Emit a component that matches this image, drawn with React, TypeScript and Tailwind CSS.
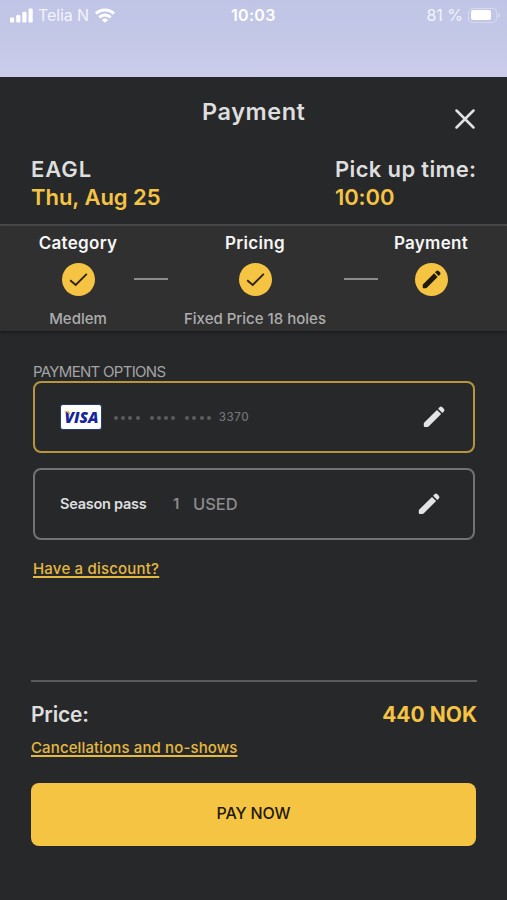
import React from "react";

type IconProps = { className?: string };

function Pencil({ className }: IconProps) {
  return (
    <svg viewBox="0 0 22 22" className={className} fill="currentColor">
      <path d="M14 3.900 18.100 8 5.600 20.500a1.700 1.700 0 0 1-1.200.500H1.800A1 1 0 0 1 .800 20v-2.400c0-.500.200-.900.500-1.200z" />
      <path d="m15.100 2.700 1.500-1.500a2 2 0 0 1 2.700 0l1.500 1.500a2 2 0 0 1 0 2.700l-1.500 1.500z" />
    </svg>
  );
}

function Check() {
  return (
    <svg viewBox="0 0 33 33" className="size-[33px]">
      <path d="M8.200 17.200 13.700 21.900 24.800 10.800" fill="none" stroke="#2b210c" strokeWidth="1.900" />
    </svg>
  );
}

function Signal() {
  return (
    <svg viewBox="0 0 23 15" className="h-[15px] w-[23px]" fill="#fff">
      <rect x="0" y="9.500" width="4.200" height="5" rx="1.200" />
      <rect x="6.200" y="7" width="4.200" height="7.500" rx="1.200" />
      <rect x="12.300" y="3.800" width="4.200" height="10.700" rx="1.200" />
      <rect x="18.500" y="0.500" width="4.200" height="14" rx="1.200" />
    </svg>
  );
}

function Wifi() {
  return (
    <svg viewBox="0 0 20 15" className="ml-[6px] h-[15px] w-[20px]" fill="none" stroke="#fff" strokeWidth="3">
      <path d="M1 5.600a12.800 12.800 0 0 1 18 0" />
      <path d="M4.300 9.400a8 8 0 0 1 11.400 0" />
      <path d="M10 14.800 6.900 11.900a4.300 4.300 0 0 1 6.200 0z" fill="#fff" stroke="none" />
    </svg>
  );
}

function StepLine({ className }: IconProps) {
  return <div className={`mt-[51.500px] h-0.5 w-[34px] shrink-0 bg-[#8b8b8b] ${className}`} />;
}

function Step({ title, note, children, className }: { title: string; note?: string; children: React.ReactNode; className: string }) {
  return (
    <div className={`flex shrink-0 flex-col items-center whitespace-nowrap ${className}`}>
      <div className="mt-[6px] h-[22px] text-[17px] leading-[22px] font-semibold tracking-[0.300px] text-[#f6f6f6]">{title}</div>
      <div className="mt-[9px] flex size-[33px] items-center justify-center rounded-full bg-[#f6c443] text-[#211a08]">{children}</div>
      <div className="mt-3 text-[15px] leading-[22px] font-medium text-[#adadad]">{note}</div>
    </div>
  );
}

function Dots() {
  return (
    <div className="flex gap-[10px]">
      {[0, 1, 2].map((group) => (
        <div key={group} className="flex gap-[3.200px]">
          {[0, 1, 2, 3].map((dot) => (
            <i key={dot} className="size-1 rounded-full bg-[#5c5d5f]" />
          ))}
        </div>
      ))}
    </div>
  );
}

function Visa() {
  return (
    <div className="flex h-[26px] w-[42px] items-center justify-center rounded-[3px] border border-[#243a80] bg-white">
      <svg viewBox="0 0 40 24" className="h-6 w-10">
        <text x="3.500" y="17.800" fontFamily="Open Sans, sans-serif" fontSize="16" fontWeight="800" fontStyle="italic" textLength="34" lengthAdjust="spacingAndGlyphs" fill="#17259a">
          VISA
        </text>
        <path d="M3 6.200h4.300c.700 0 1 .300 1.200 1l.900 3.600C8.300 8.700 6 7.200 3 6.600z" fill="#e8a33a" />
      </svg>
    </div>
  );
}

export default function App() {
  return (
    <main className="flex h-[900px] w-[507px] flex-col overflow-hidden bg-[#27282a] font-['Inter',sans-serif] whitespace-nowrap">
      <div className="h-[77px] shrink-0 bg-linear-to-b from-[#c0c5e6] via-[#c4c8e7] to-[#cbcdea] pt-1">
        <div className="flex h-[22px] items-center pr-[7px] pl-[10px] text-[#f3f4fc]">
          <div className="flex w-[221px] items-center">
            <Signal />
            <span className="ml-[5px] text-[16px] tracking-[-0.100px]">Telia N</span>
            <Wifi />
          </div>
          <span className="text-[16px] font-semibold tracking-[0.300px] text-white">10:03</span>
          <span className="ml-auto text-[16px]">81 %</span>
          <div className="ml-[5px] flex h-[15px] w-[29px] items-center rounded-[4px] border border-[#d6d9f0] pl-[2px]">
            <div className="h-[10px] w-[20px] rounded-[2px] bg-white" />
          </div>
          <div className="ml-px h-[5px] w-[2px] rounded-r bg-[#d6d9f0]" />
        </div>
      </div>

      <header className="h-[149px] shrink-0 border-b-2 border-[#4b4c4e] text-[#dededf]">
        <div className="flex h-[78px] pl-[202px]">
          <h1 className="mt-5 w-[253px] text-[23.500px] leading-[30px] font-semibold tracking-[0.550px]">Payment</h1>
          <svg viewBox="0 0 20 20" className="mt-8 size-5" stroke="#e2e2e2" strokeWidth="2.500" strokeLinecap="round">
            <path d="M1.500 1.500 18.500 18.500M18.500 1.500 1.500 18.500" />
          </svg>
        </div>
        <div className="flex justify-between pr-[31px] pl-[31px] text-[22px] leading-[28px] font-semibold">
          <div>
            <div className="tracking-[0.900px]">EAGL</div>
            <div className="tracking-[-0.030px] text-[#f6c443]">Thu, Aug 25</div>
          </div>
          <div className="w-[141px]">
            <div className="tracking-[0.350px]">Pick up time:</div>
            <div className="tracking-[-0.100px] text-[#f6c443]">10:00</div>
          </div>
        </div>
      </header>

      <section className="flex h-[105px] shrink-0 bg-[#303030] pl-[28px] shadow-[0_1px_3px_rgba(0,0,0,0.500)]">
        <Step title="Category" note="Medlem" className="w-[100px]"><Check /></Step>
        <StepLine className="ml-1.5" />
        <Step title="Pricing" note="Fixed Price 18 holes" className="ml-[12px] w-[150px]"><Check /></Step>
        <StepLine className="ml-[14px]" />
        <Step title="Payment" className="ml-[3px] w-[100px]"><Pencil className="size-[19px]" /></Step>
      </section>

      <section className="h-[349px] shrink-0 pt-[30px] pr-8 pl-[33px]">
        <h2 className="h-5 text-[15px] leading-[22px] tracking-[-0.700px] text-[#a3a3a4]">PAYMENT OPTIONS</h2>
        <div className="flex h-[72px] items-center rounded-[8px] border-2 border-[#b8943f] pl-[25px]">
          <Visa />
          <div className="mt-0.5 ml-3"><Dots /></div>
          <span className="mt-0.5 ml-[8px] text-[11.500px] font-medium tracking-[0.600px] text-[#737476]">3370</span>
          <Pencil className="mr-[28px] ml-auto size-[22px] text-[#e4e4e4]" />
        </div>
        <div className="mt-[15px] flex h-[72px] items-center rounded-[8px] border-2 border-[#717274] pl-[25px]">
          <span className="w-[113px] text-[14.500px] font-semibold tracking-[-0.250px] text-[#dededf]">Season pass</span>
          <span className="mt-px w-[20px] text-[15px] font-semibold text-[#8b8b8c]">1</span>
          <span className="mt-px text-[16.500px] font-medium text-[#8b8b8c]">USED</span>
          <Pencil className="mr-[33px] ml-auto size-[22px] text-[#e4e4e4]" />
        </div>
        <a className="mt-[19px] block h-[19px] w-fit text-[15px] leading-[19px] font-medium tracking-[0.200px] text-[#e5b840] underline decoration-[1.500px] underline-offset-2 [text-decoration-skip-ink:none]">Have a discount?</a>
      </section>

      <footer className="mr-[30px] ml-[31px] flex-1 border-t-2 border-[#5a5b5d]">
        <div className="mt-[18px] flex h-[30px] items-center justify-between text-[21px] font-semibold">
          <span className="tracking-[-0.200px] text-[#dededf]">Price:</span>
          <span className="font-bold text-[#f6c443]">440 NOK</span>
        </div>
        <a className="mt-[8px] block h-[20px] w-fit text-[15px] leading-[20px] font-medium tracking-[0.120px] text-[#e5b840] underline decoration-[1.500px] underline-offset-2 [text-decoration-skip-ink:none]">Cancellations and no-shows</a>
        <button className="mt-[25px] block h-[63px] w-[445px] rounded-[8px] bg-[#f6c443] pb-[3px] text-[16px] font-medium tracking-[-0.150px] text-[#211a08]">PAY NOW</button>
      </footer>
    </main>
  );
}
